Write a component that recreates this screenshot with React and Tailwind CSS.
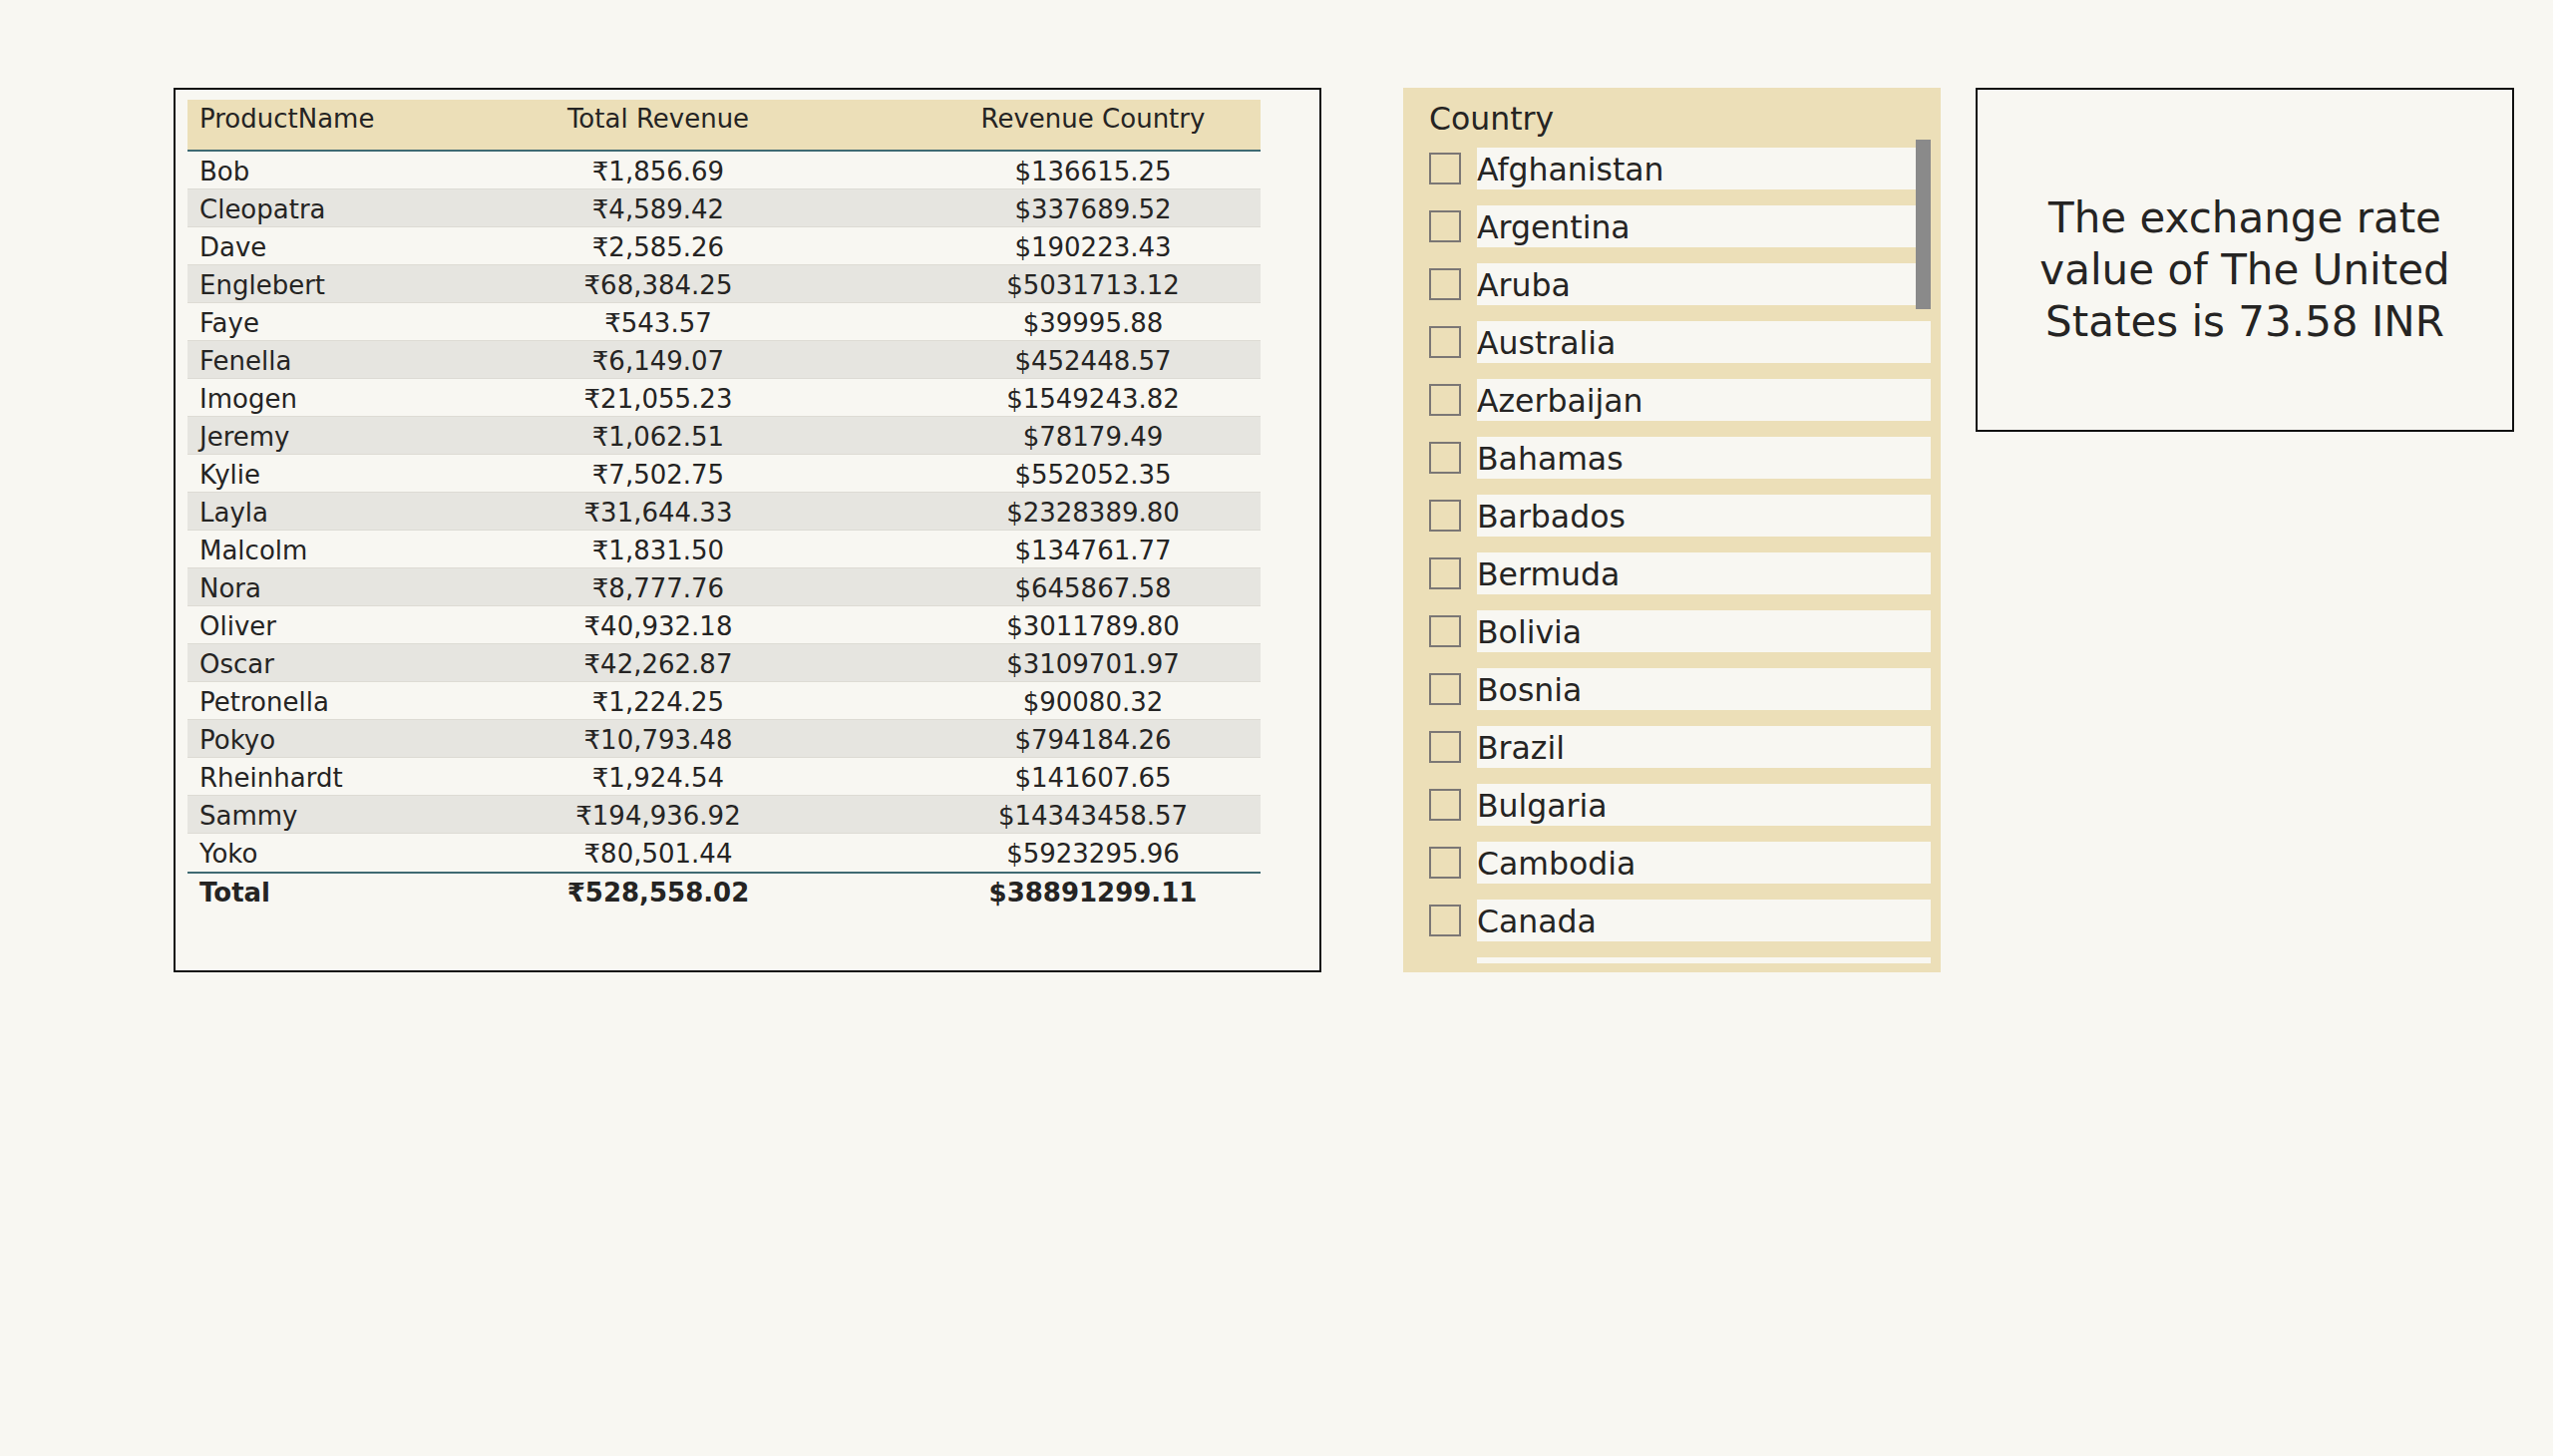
import React from "react";

const rows = [
  ["Bob", "₹1,856.69", "$136615.25"],
  ["Cleopatra", "₹4,589.42", "$337689.52"],
  ["Dave", "₹2,585.26", "$190223.43"],
  ["Englebert", "₹68,384.25", "$5031713.12"],
  ["Faye", "₹543.57", "$39995.88"],
  ["Fenella", "₹6,149.07", "$452448.57"],
  ["Imogen", "₹21,055.23", "$1549243.82"],
  ["Jeremy", "₹1,062.51", "$78179.49"],
  ["Kylie", "₹7,502.75", "$552052.35"],
  ["Layla", "₹31,644.33", "$2328389.80"],
  ["Malcolm", "₹1,831.50", "$134761.77"],
  ["Nora", "₹8,777.76", "$645867.58"],
  ["Oliver", "₹40,932.18", "$3011789.80"],
  ["Oscar", "₹42,262.87", "$3109701.97"],
  ["Petronella", "₹1,224.25", "$90080.32"],
  ["Pokyo", "₹10,793.48", "$794184.26"],
  ["Rheinhardt", "₹1,924.54", "$141607.65"],
  ["Sammy", "₹194,936.92", "$14343458.57"],
  ["Yoko", "₹80,501.44", "$5923295.96"],
];

// last entry is only peeking out below the fold, so no label shown
const countries = [
  "Afghanistan",
  "Argentina",
  "Aruba",
  "Australia",
  "Azerbaijan",
  "Bahamas",
  "Barbados",
  "Bermuda",
  "Bolivia",
  "Bosnia",
  "Brazil",
  "Bulgaria",
  "Cambodia",
  "Canada",
  "",
];

function RevenueTable() {
  return (
    <div className="w-[1151px] h-[887px] border-2 border-[#111111] pl-[12px] pt-[10px] shrink-0">
      <div className="w-[1076px] text-[26px] leading-[30px]">
        {/* header */}
        <div className="grid grid-cols-[204px_536px_336px] h-[52px] bg-[#ecdfb8] border-b-2 border-[#3f6a72] pt-[4px]">
          <div className="pl-[12px]">ProductName</div>
          <div className="text-center">Total Revenue</div>
          <div className="text-center">Revenue Country</div>
        </div>

        {rows.map((r, i) => (
          <div
            key={r[0]}
            className={
              "grid grid-cols-[204px_536px_336px] h-[38px] items-center pt-[2px] " +
              (i % 2 === 1 ? "bg-[#e6e5e0] " : "bg-[#f8f7f2] ") +
              (i < rows.length - 1 ? "border-b border-[#dddbd4]" : "")
            }
          >
            <div className="pl-[12px]">{r[0]}</div>
            <div className="text-center">{r[1]}</div>
            <div className="text-center">{r[2]}</div>
          </div>
        ))}

        {/* total */}
        <div className="grid grid-cols-[204px_536px_336px] h-[40px] items-center border-t-2 border-[#3f6a72] font-bold">
          <div className="pl-[12px]">Total</div>
          <div className="text-center">₹528,558.02</div>
          <div className="text-center">$38891299.11</div>
        </div>
      </div>
    </div>
  );
}

function CountrySlicer() {
  return (
    <div className="w-[539px] h-[887px] bg-[#ecdfb8] pl-[26px] pr-[10px] pt-[13px] pb-[9px] flex flex-col shrink-0">
      <div className="text-[31.5px] leading-[37px] h-[39px]">Country</div>
      <div className="relative flex-1 overflow-hidden">
        {countries.map((c, i) => (
          <div key={i} className="flex items-center py-[8px]">
            <div
              className={
                "w-[32px] h-[32px] shrink-0 " +
                (c ? "border-2 border-[#7b7775]" : "")
              }
            />
            <div className="ml-[16px] flex-1 h-[42px] bg-[#f8f7f2] flex items-center pt-[3px] text-[31.5px] leading-[37px]">
              {c}
            </div>
          </div>
        ))}
        {/* scroll thumb */}
        <div className="absolute right-0 top-0 w-[15px] h-[170px] bg-[#8a8a8a]" />
      </div>
    </div>
  );
}

function RateCard() {
  return (
    <div className="w-[540px] h-[345px] border-2 border-[#111111] flex items-center justify-center pt-[20px] shrink-0">
      <p className="text-[42px] leading-[52px] text-center">
        The exchange rate
        <br />
        value of The United
        <br />
        States is 73.58 INR
      </p>
    </div>
  );
}

export default function App() {
  return (
    <div
      className="min-h-screen bg-[#f8f7f2] text-[#252423] pl-[174px] pt-[88px]"
      style={{ fontFamily: '"DejaVu Sans", "Noto Sans", sans-serif' }}
    >
      <div className="flex items-start">
        <RevenueTable />
        <div className="ml-[82px]">
          <CountrySlicer />
        </div>
        <div className="ml-[35px]">
          <RateCard />
        </div>
      </div>
    </div>
  );
}
